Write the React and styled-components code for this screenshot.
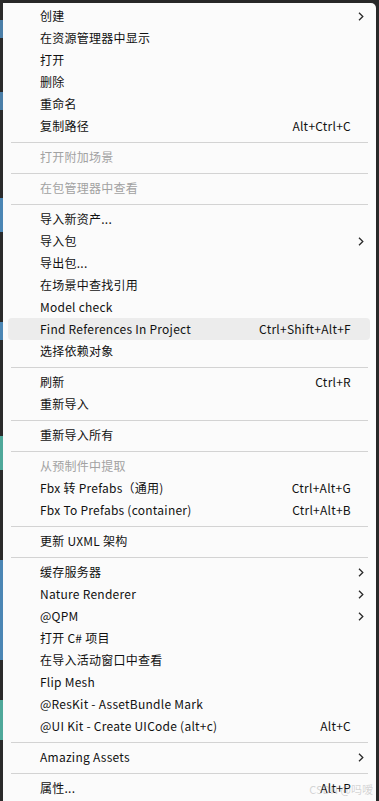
import React from 'react';
import styled, { createGlobalStyle } from 'styled-components';

const GlobalStyle = createGlobalStyle`
  html, body {
    margin: 0;
    padding: 0;
    background: #262626;
    overflow: hidden;
  }
  body {
    font-family: "Noto Sans CJK SC", "Noto Sans", sans-serif;
  }
`;

const Screen = styled.div`
  position: relative;
  display: flex;
  width: 379px;
  height: 801px;
  overflow: hidden;
  background: #282828;
`;

const EdgeStrip = styled.div`
  width: 3px;
  flex: none;
  background: linear-gradient(
    to bottom,
    #2b2b2b 0px, #2b2b2b 20px,
    #4b7fa8 20px, #4b7fa8 38px,
    #2b2b2b 38px, #2b2b2b 92px,
    #4b7fa8 92px, #4b7fa8 110px,
    #2b2b2b 110px, #2b2b2b 198px,
    #4b86b4 198px, #4b86b4 232px,
    #2b2b2b 232px, #2b2b2b 322px,
    #4b86b4 322px, #4b86b4 340px,
    #2b2b2b 340px, #2b2b2b 436px,
    #4fa89a 436px, #4fa89a 470px,
    #2b2b2b 470px, #2b2b2b 560px,
    #4b86b4 560px, #4b86b4 660px,
    #2b2b2b 660px, #2b2b2b 700px,
    #4fa89a 700px, #4fa89a 740px,
    #2b2b2b 740px
  );
`;

const Menu = styled.div`
  margin-top: 3px;
  width: 373px;
  flex: none;
  padding-top: 2px;
  background: #fbfbfb;
  border-top-right-radius: 5px;
  box-sizing: border-box;
  display: flex;
  flex-direction: column;
`;

const Row = styled.div`
  display: grid;
  grid-template-columns: 1fr auto 19px;
  align-items: center;
  height: 22px;
  margin: 0 6px 0 5px;
  padding-left: 32px;
  border-radius: 4px;
  font-size: 12px;
  letter-spacing: 0.25px;
  color: ${p => (p.$disabled ? '#a2a2a2' : '#111')};
  background: ${p => (p.$hover ? '#ececec' : 'transparent')};
  white-space: nowrap;
`;

const Label = styled.span`
  line-height: 22px;
`;

const Shortcut = styled.span`
  line-height: 22px;
  color: #111;
`;

const ArrowCell = styled.span`
  display: flex;
  justify-content: center;
  align-items: center;
`;

const Separator = styled.div`
  height: 1px;
  margin: 5px 8px 3px 8px;
  background: #d3d3d3;
`;

const Watermark = styled.div`
  position: absolute;
  right: 6px;
  bottom: 4px;
  font-size: 11px;
  color: rgba(150, 150, 150, 0.4);
  font-family: "Noto Sans CJK SC", "Noto Sans", sans-serif;
  pointer-events: none;
`;

const Chevron = () => (
  <svg width="6" height="9" viewBox="0 0 6 9">
    <path d="M1 0.8 L4.8 4.5 L1 8.2" fill="none" stroke="#2a2a2a" strokeWidth="1.3" />
  </svg>
);

const items = [
  { label: '创建', sub: true },
  { label: '在资源管理器中显示' },
  { label: '打开' },
  { label: '删除' },
  { label: '重命名' },
  { label: '复制路径', key: 'Alt+Ctrl+C' },
  '-',
  { label: '打开附加场景', disabled: true },
  '-',
  { label: '在包管理器中查看', disabled: true },
  '-',
  { label: '导入新资产...' },
  { label: '导入包', sub: true },
  { label: '导出包...' },
  { label: '在场景中查找引用' },
  { label: 'Model check' },
  { label: 'Find References In Project', key: 'Ctrl+Shift+Alt+F', hover: true },
  { label: '选择依赖对象' },
  '-',
  { label: '刷新', key: 'Ctrl+R' },
  { label: '重新导入' },
  '-',
  { label: '重新导入所有' },
  '-',
  { label: '从预制件中提取', disabled: true },
  { label: 'Fbx 转 Prefabs（通用)', key: 'Ctrl+Alt+G' },
  { label: 'Fbx To Prefabs (container)', key: 'Ctrl+Alt+B' },
  '-',
  { label: '更新 UXML 架构' },
  '-',
  { label: '缓存服务器', sub: true },
  { label: 'Nature Renderer', sub: true },
  { label: '@QPM', sub: true },
  { label: '打开 C# 项目' },
  { label: '在导入活动窗口中查看' },
  { label: 'Flip Mesh' },
  { label: '@ResKit - AssetBundle Mark' },
  { label: '@UI Kit - Create UICode (alt+c)', key: 'Alt+C' },
  '-',
  { label: 'Amazing Assets', sub: true },
  '-',
  { label: '属性...', key: 'Alt+P' },
];

export default function App() {
  return (
    <>
      <GlobalStyle />
      <Screen>
        <EdgeStrip />
        <Menu>
          {items.map((it, i) =>
            it === '-' ? (
              <Separator key={i} />
            ) : (
              <Row key={i} $disabled={it.disabled} $hover={it.hover}>
                <Label>{it.label}</Label>
                <Shortcut>{it.key || ''}</Shortcut>
                <ArrowCell>{it.sub ? <Chevron /> : null}</ArrowCell>
              </Row>
            )
          )}
        </Menu>
        <Watermark>CSDN @吗嗳</Watermark>
      </Screen>
    </>
  );
}
